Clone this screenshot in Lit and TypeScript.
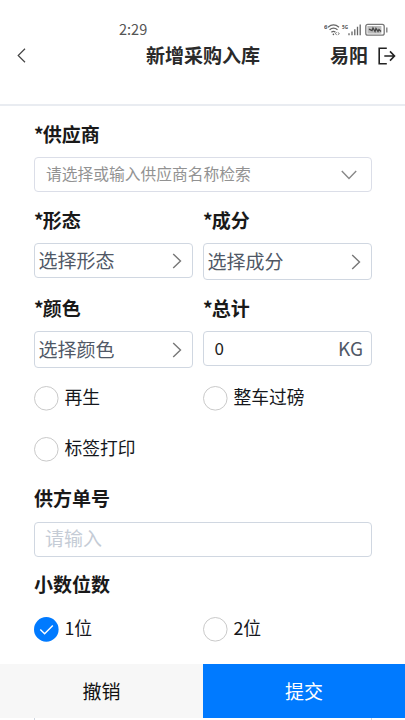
import { LitElement, html, svg, css } from "lit";
import { customElement, property } from "lit/decorators.js";

const chevronRight = html`<svg class="chev" width="10" height="16" viewBox="0 0 10 16">
  <path d="M1.2 1L8.5 8L1.2 15" fill="none" stroke="#777" stroke-width="1.4" />
</svg>`;

@customElement("check-option")
class CheckOption extends LitElement {
  @property() label = "";
  @property({ type: Boolean }) checked = false;

  static styles = css`
    :host { display: flex; align-items: center; height: 25px; }
    .dot { flex: none; display: block; margin-right: 5.5px; }
    .text { font-size: 17.8px; line-height: 24px; color: #15171c; margin-top: -5px; white-space: nowrap; }
  `;

  render() {
    return html`<svg class="dot" width="25" height="25" viewBox="0 0 25 25">
        ${this.checked
          ? svg`<circle cx="12.3" cy="12.4" r="12.3" fill="#007aff"/><path d="M6.3 12.6L10.6 16.7L18.8 8.4" fill="none" stroke="#fff" stroke-width="1.4"/>`
          : svg`<circle cx="12.3" cy="12.3" r="11.8" fill="#fff" stroke="#c9c9c9" stroke-width="1"/>`}
      </svg><span class="text">${this.label}</span>`;
  }
}

@customElement("app-root")
class AppRoot extends LitElement {
  static styles = css`
    :host {
      display: flex; flex-direction: column; box-sizing: border-box;
      height: 720px; width: 405px; overflow: hidden; background: #fff; color: #191919;
      font-family: "Noto Sans CJK SC", sans-serif;
    }
    .header { height: 106px; box-sizing: border-box; border-bottom: 2px solid #e9ecf1; flex: none; }
    .status { display: flex; align-items: center; height: 20px; padding: 19px 16px 0 119px; justify-content: space-between; }
    .time { font-size: 14.5px; line-height: 20px; color: #555; }
    .nav { display: grid; grid-template-columns: 1fr auto 1fr; align-items: center; height: 32px; padding: 0 8px 0 17px; }
    .title, .user { font-size: 19px; line-height: 28px; font-weight: 700; color: #2a2a2a; white-space: nowrap; }
    .title { transform: translateX(-4px); }
    .account { display: flex; align-items: center; justify-content: flex-end; gap: 9px; }
    .back, .exit, .chev { display: block; flex: none; }
    .back { margin-top: 1px; }
    .exit { margin-top: 2px; }
    .status svg { margin-top: 1px; font-family: "Noto Sans", sans-serif; }
    .account { padding-right: 1px; }
    .form { flex: 1; min-height: 0; overflow: hidden; padding: 14px 33px 0 34px; }
    .label { height: 28px; line-height: 28px; font-size: 19px; font-weight: 700; white-space: nowrap; margin-bottom: 9px; }
    .star { letter-spacing: -1px; }
    .pair { display: grid; grid-template-columns: 159px 169px; column-gap: 10px; align-items: start; }
    .section { margin-top: 14px; }
    .box {
      box-sizing: border-box; height: 35px; border: 1px solid #d0d7e1; border-radius: 4px; background: #fff;
      display: flex; align-items: center; justify-content: space-between; font-size: 19px; line-height: 30px; color: #505866;
      padding: 0 10px 0 3.5px; white-space: nowrap;
    }
    .box span { margin-top: -2px; }
    .tall { height: 37px; }
    .supplier { font-size: 15.75px; color: #929292; padding: 0 14px 0 11px; border-color: #dbdee8; }
    .total { padding: 0 8px 0 10.5px; }
    .amount { font-size: 17px; color: #222; }
    .entry { color: #c5ccd6; padding-left: 10px; }
    .entry span { margin-top: -4px; }
    .options { margin-top: 18px; row-gap: 26px; }
    .number { margin-top: 22px; }
    .number .label { margin-bottom: 10px; }
    .lower { margin-top: 13px; }
    .digits { margin-top: 19px; }
    .actions { flex: none; display: grid; grid-template-columns: 203px 1fr; height: 54px; margin-top: auto; }
    .btn { display: flex; align-items: center; justify-content: center; font-size: 19px; line-height: 28px; }
    .cancel { background: #f7f7f7; color: #111; }
    .submit { background: #007aff; color: #fff; }
    .next { flex: none; height: 2px; margin: 0 33px 0 34px; box-sizing: border-box; border: solid #d0d7e1; border-width: 0 1px; }
  `;

  private required(text: string) {
    return html`<div class="label"><span class="star">*</span>${text}</div>`;
  }

  render() {
    return html`
      <div class="header">
        <div class="status">
          <span class="time">2:29</span>
          <svg width="65" height="14" viewBox="0 0 65 14" fill="none" stroke="#666" stroke-width="1.3">
            <text x="0" y="6" font-size="6" font-weight="700" fill="#555" stroke="none">6</text>
            <path d="M4 4.2Q9.5 -.4 15 4.2M5.6 6.8Q9.5 3.6 13.5 6.8M7.4 9.3Q9.5 7.6 11.4 9.3" />
            <circle cx="9.4" cy="11.4" r=".8" fill="#555" stroke="none" />
            <path d="M12.8 9.4l-1.6 1.2 1.6 1.2M13.8 9.4l1.6 1.2-1.6 1.2" stroke-width=".8" />
            <text x="18" y="6" font-size="6" font-weight="700" fill="#555" stroke="none" textLength="6" lengthAdjust="spacingAndGlyphs">5G</text>
            <path d="M25 12.3v-2M28 12.3V8.4M30.8 12.3V6.2M33.5 12.3V3.8M36.2 12.3V1.4" />
            <rect x="41.8" y="1.4" width="18.4" height="10.8" rx="2" stroke="#777" />
            <rect x="43.4" y="3" width="14" height="7.6" fill="#bbb" stroke="none" />
            <path d="M45 6.2L48 7.7L49 5L51 8.5L52 5.5L54 8.4L55 6.5L57 8.5" stroke="#444" />
            <path d="M62.8 4.5v5" stroke="#777" />
          </svg>
        </div>
        <div class="nav">
          <svg class="back" width="9" height="15" viewBox="0 0 9 15"><path d="M8 .8L1.2 7.5L8 14.2" fill="none" stroke="#444" stroke-width="1.2" /></svg>
          <span class="title">新增采购入库</span>
          <span class="account">
            <span class="user">易阳</span>
            <svg class="exit" width="19" height="18" viewBox="0 0 19 18" fill="none" stroke="#222" stroke-width="1.6">
              <path d="M9.8 1.2H2.2V16.8H9.8M7.3 9H17.4M13 4.4L17.5 9L13 13.6" />
            </svg>
          </span>
        </div>
      </div>
      <div class="form">
        ${this.required("供应商")}
        <div class="box supplier">
          <span>请选择或输入供应商名称检索</span>
          <svg class="chev" width="16" height="10" viewBox="0 0 16 10"><path d="M.8 1L8 8.6L15.2 1" fill="none" stroke="#888" stroke-width="1.4" /></svg>
        </div>
        <div class="pair section">
          <div>${this.required("形态")}<div class="box"><span>选择形态</span>${chevronRight}</div></div>
          <div>${this.required("成分")}<div class="box tall"><span>选择成分</span>${chevronRight}</div></div>
        </div>
        <div class="pair section">
          <div>${this.required("颜色")}<div class="box tall"><span>选择颜色</span>${chevronRight}</div></div>
          <div>${this.required("总计")}<div class="box total"><span class="amount">0</span><span>KG</span></div></div>
        </div>
        <div class="pair options">
          <check-option label="再生"></check-option>
          <check-option label="整车过磅"></check-option>
          <check-option label="标签打印"></check-option>
        </div>
        <div class="number">
          <div class="label">供方单号</div>
          <div class="box entry"><span>请输入</span></div>
        </div>
        <div class="lower"><div class="label">小数位数</div></div>
        <div class="pair digits">
          <check-option label="1位" checked></check-option>
          <check-option label="2位"></check-option>
        </div>
      </div>
      <div class="actions">
        <div class="btn cancel">撤销</div>
        <div class="btn submit">提交</div>
      </div>
      <div class="next"></div>
    `;
  }
}
